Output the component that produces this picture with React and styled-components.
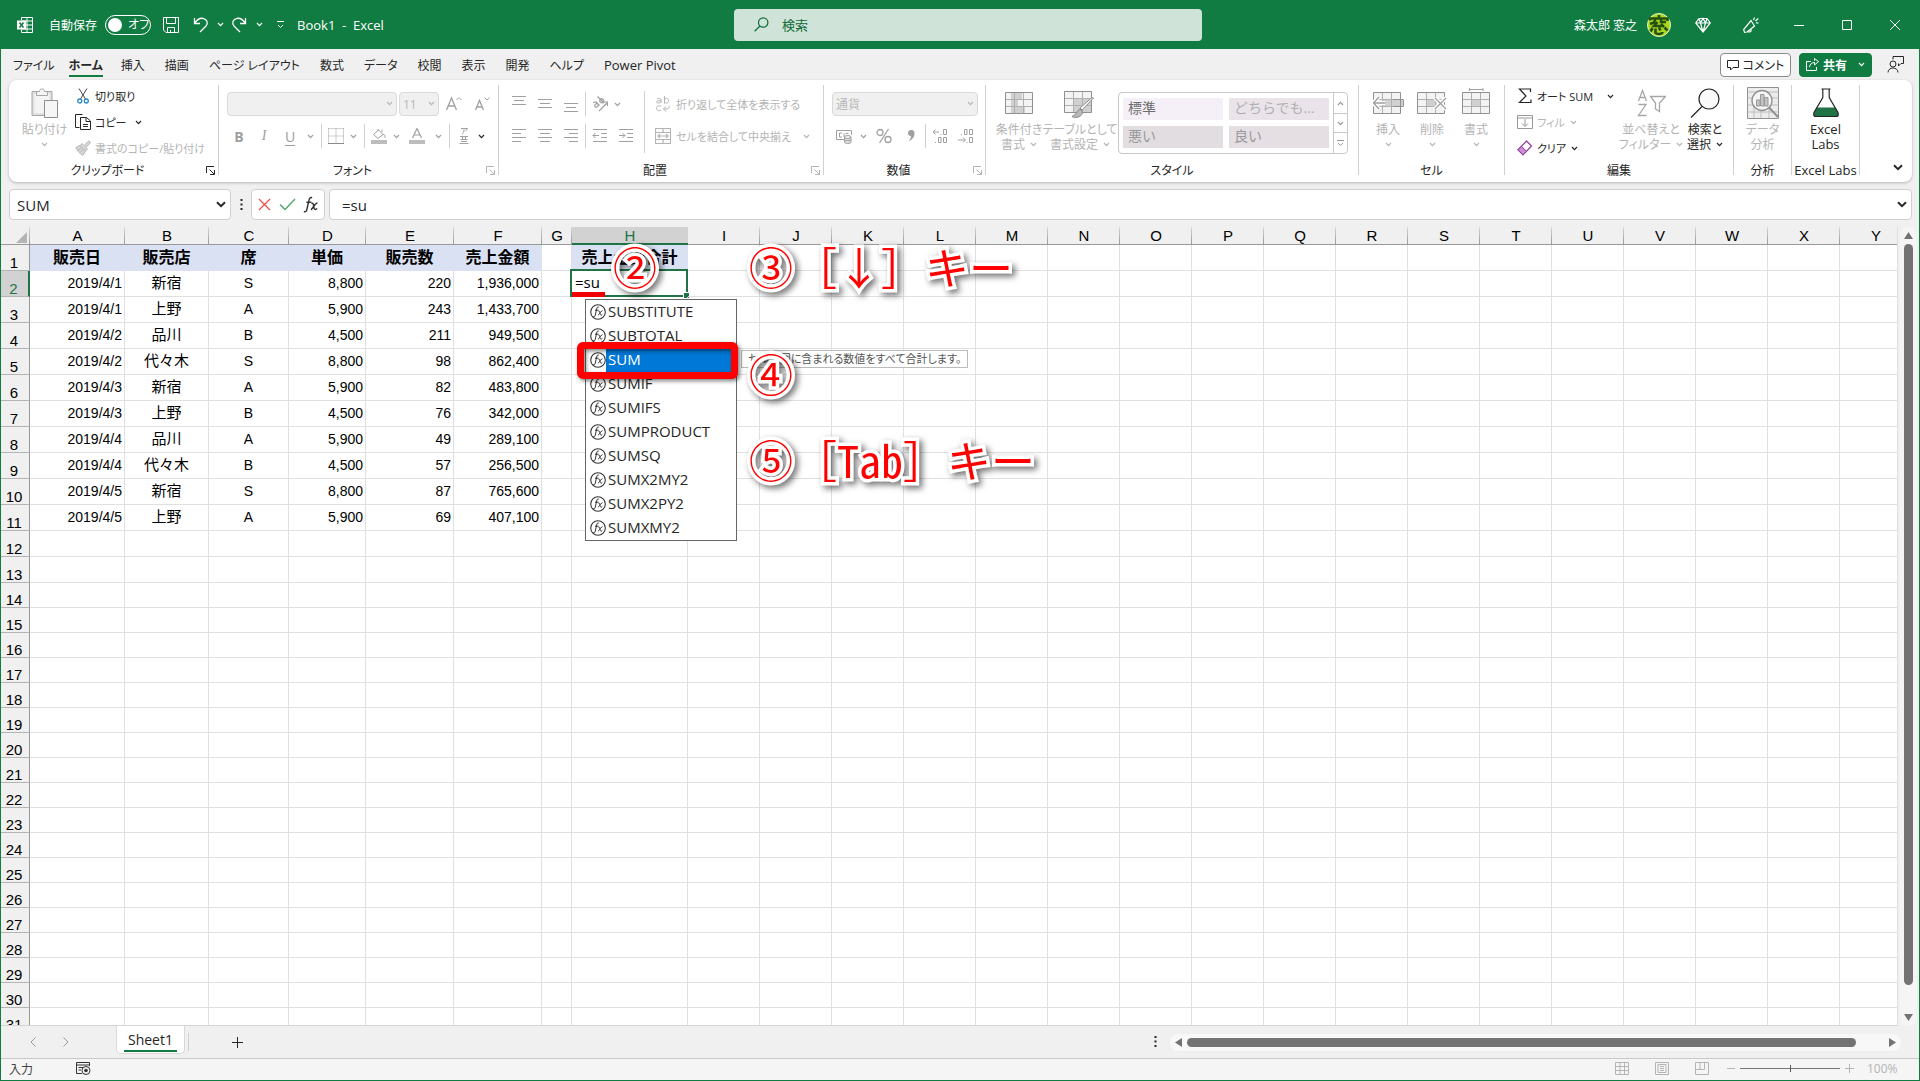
import React from 'react'
import styled, { createGlobalStyle, css } from 'styled-components'

const green = '#107c41'
const ink = '#262626'
const off = '#b4b4b4'

const GlobalStyle = createGlobalStyle`
*{
    box-sizing: border-box;
}
body{
    margin: 0;
    background: #f0f0f0;
    color: ${ink};
    font-family: "Open Sans", "Noto Sans CJK JP", sans-serif;
    font-feature-settings: "palt";
    font-size: 12px;
    overflow: hidden;
}
button, input, select{
    font: inherit;
    font-feature-settings: inherit;
    color: inherit;
    border: 0;
    padding: 0;
    margin: 0;
    background: none;
    outline: none;
}
svg{
    display: block;
    flex: none;
}
`
const Window = styled.div`
height: 100vh;
display: flex;
flex-direction: column;
border: 1px solid ${green};
border-top: 0;
`

/* title bar */
const TitleBar = styled.header`
height: 49px;
flex: none;
display: flex;
align-items: center;
background: ${green};
color: white;
`
const TitleSide = styled.div`
flex: 1 1 0;
display: flex;
align-items: center;
justify-content: ${props => props.$end ? 'flex-end' : 'flex-start'};
padding-left: ${props => props.$end ? '0' : '16px'};
`
const AutoSave = styled.label`
display: flex;
align-items: center;
gap: 8px;
margin: 0 9px 0 16px;
`
const Pill = styled.span`
width: 46px;
height: 20px;
display: flex;
align-items: center;
gap: 6px;
padding-left: 2px;
border: 1px solid white;
border-radius: 10px;
line-height: 18px;
`
const Knob = styled.input`
appearance: none;
width: 14px;
height: 14px;
border-radius: 50%;
background: white;
`
const TitleButton = styled.button`
width: ${props => props.$w || 48}px;
height: 32px;
display: flex;
align-items: center;
justify-content: center;
`
const FileName = styled.h1`
margin: 0 0 0 4px;
font-size: 13px;
font-weight: 400;
white-space: pre;
`
const Search = styled.label`
flex: 0 1 468px;
height: 32px;
padding-left: 20px;
display: flex;
align-items: center;
gap: 13px;
background: #cfe3d8;
border-radius: 4px;
color: #0f6b38;
`
const SearchInput = styled.input`
flex: 1;
font-size: 13px;
&::placeholder{
    color: #0f6b38;
    opacity: 1;
}
`
const Avatar = styled.span`
margin: 0 8px 0 10px;
`

/* tabs */
const TabBar = styled.nav`
height: 31px;
flex: none;
display: flex;
align-items: center;
padding: 0 15px 0 6px;
`
const Tab = styled.a`
height: 31px;
padding: 0 ${props => props.$pad || 10}px;
font-size: ${props => props.$latin ? '13px' : '12px'};
color: ${ink};
text-decoration: none;
white-space: nowrap;
`
const TabText = styled.span`
display: block;
height: 26px;
line-height: 29px;
margin-top: 2px;
${props => props.$active && css`
font-weight: 700;
border-bottom: 2px solid ${green};
`}
`
const Spacer = styled.div`
flex: 1;
`
const CommentButton = styled.button`
width: 71px;
height: 24px;
display: flex;
align-items: center;
justify-content: center;
gap: 4px;
border: 1px solid #8a8a8a;
border-radius: 4px;
background: white;
white-space: nowrap;
`
const ShareButton = styled(CommentButton)`
width: 73px;
margin: 0 15px 0 8px;
border-color: ${green};
background: ${green};
color: white;
font-weight: 700;
`

/* ribbon */
const Ribbon = styled.section`
height: 102px;
flex: none;
display: flex;
margin: 0 7px 7px 8px;
background: white;
border-radius: 8px;
box-shadow: 0 1px 3px rgba(0,0,0,0.25);
`
const GroupBox = styled.div`
flex: 0 0 ${props => props.$w}px;
display: flex;
flex-direction: column;
padding-top: 3px;
`
const Divider = styled.div`
flex: 0 0 1px;
height: 90px;
margin-top: 5px;
background: #d0d0d0;
`
const GroupBody = styled.div`
height: 78px;
display: flex;
padding-left: ${props => props.$pad}px;
`
const GroupFoot = styled.div`
height: 18px;
display: flex;
align-items: center;
padding-right: ${props => props.$launcher ? '3px' : '0'};
font-size: ${props => props.$latin ? '13px' : '12px'};
`
const GroupName = styled.span`
flex: 1;
text-align: center;
white-space: nowrap;
`
const Stack = styled.div`
display: flex;
flex-direction: column;
width: ${props => props.$w ? props.$w + 'px' : 'auto'};
padding-top: ${props => props.$top || 0}px;
`
const Row = styled.div`
height: ${props => props.$h || 32}px;
display: flex;
align-items: center;
gap: ${props => props.$gap || 0}px;
`
const Tool = styled.button`
flex: none;
width: ${props => props.$w || 26}px;
height: 24px;
display: flex;
align-items: center;
justify-content: center;
font-size: 14px;
font-weight: ${props => props.$bold ? 700 : 400};
font-style: ${props => props.$italic ? 'italic' : 'normal'};
font-family: ${props => props.$italic ? '"Liberation Serif", serif' : 'inherit'};
text-decoration: ${props => props.$under ? 'underline' : 'none'};
text-underline-offset: 3px;
color: ${props => props.$on ? ink : '#a0a0a0'};
`
const Sep = styled.span`
flex: 0 0 1px;
height: ${props => props.$h || 24}px;
margin: 0 ${props => props.$m}px;
background: #d0d0d0;
`
const LineButton = styled.button`
height: 26px;
display: flex;
align-items: center;
color: ${props => props.$on ? ink : off};
font-size: 11px;
white-space: nowrap;
`
const IconSlot = styled.span`
width: ${props => props.$w || 24}px;
display: flex;
justify-content: center;
`
const Gap = styled.span`
flex: 0 0 ${props => props.$w}px;
`
const BigButton = styled.button`
width: ${props => props.$w}px;
height: 70px;
display: flex;
flex-direction: column;
align-items: center;
color: ${props => props.$on ? ink : off};
font-size: ${props => props.$latin ? '13px' : '12px'};
line-height: 15px;
white-space: nowrap;
`
const BigIcon = styled.span`
height: 39px;
display: flex;
align-items: center;
`
const BigLine = styled.span`
height: 15px;
display: flex;
align-items: center;
gap: 5px;
`
const SelectWrap = styled.span`
position: relative;
width: ${props => props.$w}px;
height: 24px;
color: #b8b8b8;
svg{
    position: absolute;
    right: 4px;
    top: 9px;
}
`
const Select = styled.select`
appearance: none;
width: 100%;
height: 24px;
padding-left: 3px;
border: 1px solid #d9d9d9;
border-radius: 4px;
background: #f0f0f0;
opacity: 1;
`
const Gallery = styled.div`
width: 230px;
height: 62px;
margin: 9px 0 0 4px;
display: flex;
border: 1px solid #c8c8c8;
border-radius: 4px;
`
const Swatches = styled.div`
flex: 1;
display: grid;
grid-template-columns: 100px 100px;
grid-template-rows: 22px 22px;
gap: 6px;
padding: 5px 4px;
`
const Swatch = styled.button`
padding-left: 5px;
line-height: 18px;
padding-bottom: 2px;
text-align: left;
font-size: 14px;
font-feature-settings: normal;
background: ${props => props.$bg};
color: ${props => props.$fg};
`
const GalleryNav = styled.div`
width: 14px;
display: grid;
grid-template-rows: 20px 19px 21px;
border-left: 1px solid #c8c8c8;
`
const NavButton = styled.button`
display: flex;
align-items: center;
justify-content: center;
color: #999;
& + &{
    border-top: 1px solid #c8c8c8;
}
`
const Collapse = styled.button`
margin: 0 9px 11px auto;
align-self: flex-end;
`

/* formula bar */
const FormulaRow = styled.div`
height: 31px;
flex: none;
display: flex;
align-items: center;
margin: 0 7px 7px 8px;
`
const Field = styled.div`
height: 31px;
display: flex;
align-items: center;
background: white;
border: 1px solid #d0d0d0;
border-radius: 4px;
${props => props.$w ? css`flex: 0 0 ${props.$w}px;` : css`flex: 1;`}
padding: 0 ${props => props.$tight ? 0 : 4}px 0 ${props => props.$pad || 7}px;
font-size: 15px;
input{
    flex: 1;
    min-width: 0;
}
`
const Dots = styled.span`
width: 20px;
display: flex;
justify-content: center;
`
const FxButton = styled.button`
width: 23px;
display: flex;
justify-content: center;
`

/* sheet */
const SheetArea = styled.main`
flex: 1;
min-height: 0;
display: flex;
`
const Sheet = styled.div`
position: relative;
flex: 1;
min-width: 0;
overflow: hidden;
border-right: 1px solid #e0e0e0;
border-bottom: 1px solid #d4d4d4;
`
const Grid = styled.table`
table-layout: fixed;
width: 1910px;
border-collapse: separate;
border-spacing: 0;
font-family: "Liberation Sans", "Noto Sans CJK JP", sans-serif;
font-feature-settings: normal;
color: black;
background: white;
`
const HeadRow = styled.tr`
height: 18px;
`
const ColHead = styled.th`
padding: 1px 0 0;
font-size: 15px;
line-height: ${props => props.$active ? '15px' : '16px'};
font-weight: 400;
color: ${props => props.$active ? '#217346' : 'black'};
background: ${props => props.$active ? '#d2d2d2' : 'linear-gradient(#d8d8d8, #999) right / 1px 100% no-repeat #f0f0f0'};
border-bottom: ${props => props.$active ? '2px solid #217346' : '1px solid #999'};
`
const Corner = styled(ColHead)`
svg{
    margin: 2px 3px 0 auto;
}
`
const SheetRow = styled.tr`
height: ${props => props.$h}px;
`
const RowHead = styled.th`
padding: 0 2px 0 0;
vertical-align: bottom;
font-size: 15px;
line-height: 15px;
font-weight: 400;
color: ${props => props.$active ? '#217346' : 'black'};
background: ${props => props.$active ? '#d2d2d2' : '#f0f0f0'};
border-right: ${props => props.$active ? '2px solid #217346' : '1px solid #999'};
border-bottom: 1px solid #b4b4b4;
`
const Cell = styled.td`
position: relative;
padding: 0 2px 1px;
height: inherit;
font-size: ${props => props.$jp ? '15px' : '14px'};
line-height: 20px;
text-align: ${props => props.$align || 'left'};
white-space: nowrap;
border-right: 1px solid #e0e0e0;
border-bottom: 1px solid #e0e0e0;
${props => props.$title && css`
padding: 1px 2px 0;
font-size: 16px;
font-weight: 700;
background: #dae1f3;
border-color: #dae1f3;
`}
`
const Editor = styled.div`
position: absolute;
inset: -2px -1px -1px -2px;
background: white;
border: 2px solid #217346;
input{
    display: block;
    width: 100%;
    height: 22px;
    padding-left: 3px;
    font-family: "Open Sans", sans-serif;
    font-size: 15px;
}
`
const Handle = styled.span`
position: absolute;
right: -3px;
bottom: -3px;
width: 6px;
height: 6px;
background: #217346;
border: 1px solid white;
border-width: 1px 0 0 1px;
`
const Underline = styled.span`
position: absolute;
left: 0;
bottom: -2px;
width: 33px;
height: 5px;
background: #f00000;
`

/* over the grid */
const Suggestions = styled.ul`
position: absolute;
left: 584px;
top: 72px;
width: 152px;
margin: 0;
padding: 0;
list-style: none;
background: white;
border: 1px solid #666;
`
const Suggestion = styled.li`
height: 24px;
display: flex;
align-items: center;
padding-left: 4px;
font-size: 15px;
`
const SuggestionName = styled.span`
flex: 1;
height: 24px;
line-height: 23px;
padding-left: 2px;
${props => props.$active && css`
background: #0078d7;
color: white;
`}
`
const Tip = styled.div`
position: absolute;
left: 740px;
top: 123px;
height: 18px;
padding: 0 6px;
line-height: 15px;
font-size: 11px;
color: #555;
background: white;
border: 1px solid #bbb;
white-space: nowrap;
`
const RedFrame = styled.div`
position: absolute;
left: 576px;
top: 115px;
width: 161px;
height: 37px;
border: 7px solid red;
border-radius: 6px;
filter: drop-shadow(2px 2px 2px rgba(0,0,0,0.5));
`
const Note = styled.div`
position: absolute;
left: ${props => props.$x}px;
top: ${props => props.$y}px;
font-family: "Noto Sans CJK JP", sans-serif;
font-feature-settings: normal;
font-size: 44px;
font-weight: 400;
line-height: 44px;
color: red;
white-space: nowrap;
text-spacing-trim: space-all;
-webkit-text-stroke: 7px white;
paint-order: stroke fill;
filter: drop-shadow(3px 3px 3px rgba(0,0,0,0.55));
`
const KeyName = styled.span`
font-feature-settings: "hwid";
`

/* scroll bars and bottom */
const VScroll = styled.div`
width: 17px;
margin: 0 2px 0 2px;
display: flex;
flex-direction: column;
align-items: center;
background: #f5f5f5;
border-radius: 8px;
`
const ScrollButton = styled.button`
width: 17px;
height: 17px;
display: flex;
align-items: center;
justify-content: center;
`
const VThumb = styled.div`
flex: 1;
width: 9px;
margin-bottom: 24px;
border-radius: 5px;
background: #737373;
`
const SheetTabs = styled.div`
height: 32px;
flex: none;
display: flex;
align-items: center;
padding-right: 18px;
`
const SmallButton = styled.button`
width: 33px;
height: 24px;
display: flex;
align-items: center;
justify-content: center;
`
const SheetTab = styled.button`
align-self: flex-start;
width: 69px;
height: 28px;
margin: 0 3px 0 34px;
padding: 0 8px;
background: white;
border: 1px solid #d9d9d9;
border-top: 0;
border-radius: 0 0 5px 5px;
font-size: 14px;
span{
    display: block;
    line-height: 25px;
    height: 25px;
    margin: 0 -1px;
    border-bottom: 2px solid ${green};
}
`
const HScroll = styled.div`
width: 731px;
height: 17px;
display: flex;
align-items: center;
background: #f8f8f8;
border-radius: 8px;
`
const HThumb = styled.div`
flex: 1;
height: 9px;
margin-right: 28px;
border-radius: 5px;
background: #737373;
`
const StatusBar = styled.footer`
height: 22px;
flex: none;
display: flex;
align-items: center;
padding: 0 18px 2px 8px;
background: #f5f5f5;
border-top: 1px solid #c8c8c8;
color: #444;
`
const ViewButton = styled.button`
width: 40px;
display: flex;
justify-content: center;
`
const Zoom = styled.input`
appearance: none;
width: 100px;
height: 9px;
margin: 0 5px;
background: linear-gradient(#777, #777) center / 100% 1px no-repeat;
&::-webkit-slider-thumb{
    appearance: none;
    width: 1px;
    height: 7px;
    background: #555;
}
`
const Percent = styled.span`
margin-left: 13px;
width: 34px;
color: ${off};
`

const Svg = ({ w = 16, h = w, box, sw = 1, children }) => (
    <svg width={w} height={h} viewBox={box || `0 0 ${w} ${h}`} fill="none" stroke="currentColor" strokeWidth={sw} aria-hidden="true">{children}</svg>
)
const Chevron = ({ up }) => (
    <Svg w={7} h={5} sw={1.2}><path d={up ? 'M1 4L3.5 1.4L6 4' : 'M1 1L3.5 3.6L6 1'} /></Svg>
)
const BigChevron = () => <Svg w={10} h={7} sw={2}><path d="M1 1.2L5 5.2L9 1.2" /></Svg>

const ExcelIcon = () => (
    <Svg>
        <path d="M4.5 3V.5H15.500V15.500H4.500V13M10 .5V15.500M4.500 4H15.500M9 8H15.500M4.500 12H15.500" />
        <path d="M0 3.500H9V12.500H0Z" fill="white" stroke="none" />
        <path d="M2.500 5.500L6.500 10.500M6.500 5.500L2.500 10.500" stroke={green} strokeWidth="1.500" />
    </Svg>
)
const SaveIcon = () => <Svg><path d="M.5.5H15.500V15.500H3L.5 13ZM3.500.5V6.500H12.500V.5M4.500 15.500V10.500H11.500V15.500M7.500 13V15" /></Svg>
const UndoIcon = () => <Svg sw={1.3}><path d="M1.500 1V6.500H7M1.800 6.200C4 2.500 7 1 10 1.300C14 2 15.500 6 13 9L7 15" /></Svg>
const RedoIcon = () => <Svg sw={1.3}><path d="M14.500 1V6.500H9M14.200 6.200C12 2.500 9 1 6 1.300C2 2 .5 6 3 9L9 15" /></Svg>
const SearchIcon = () => <Svg w={15} sw={1.2}><circle cx="9.200" cy="5.500" r="4.700" /><path d="M6 9L.6 14.300" /></Svg>
const DiamondIcon = () => <Svg sw={1.2}><path d="M4 1.500H12L15.300 6L8 15L.7 6ZM.7 6H15.300M4 1.500L5.500 6L8 15L10.500 6L12 1.500M5.500 6L8 1.500L10.500 6" /></Svg>
const MegaphoneIcon = () => <Svg sw={1.2}><path d="M8 3.500L11.500 9L4 15L1.500 15.300L.7 12.500ZM5 14.500C6.500 15.800 9 14 7.800 12M10.500 3L11.500.5M13 5.800L15.500 6M12.500 4L15.300 1.500" /></Svg>
const PortraitIcon = () => (
    <Svg w={24}>
        <circle cx="12" cy="12" r="11.500" fill="#a8d820" stroke="#e6f4c4" />
        <path d="M3 7.500V5.500H20.500V8M12 2V5M8.500 6L7 9.500L3 11M14 6V9H19M10.500 9L7 13H15M14 11L17 14M5.500 15L3.500 18.500M8.500 15.500V19.500C8.500 21.500 15.500 21.500 15.500 19M12 14.500L13.500 17.500M17.500 14.500L20.500 17.500" stroke="#25500f" strokeWidth="2.600" />
    </Svg>
)
const CommentIcon = () => <Svg w={12}><path d="M.5 1.500H11.500V8.500H6L3.500 11V8.500H.5Z" /></Svg>
const ShareIcon = () => <Svg w={13}><path d="M5 3.500H.5V12.500H10.500V9M3.500 9C4 6 6 4.500 8.500 4.500V7L12.500 3.500L8.500.5V2.800" /></Svg>
const PersonIcon = () => <Svg w={17}><circle cx="6" cy="8" r="3" /><path d="M1 16.500C1 10.500 11 10.500 11 16.500M6 3.500V.5H16.500V7.500H14L11.500 10V7.500" /></Svg>

const PasteIcon = () => (
    <Svg w={28} h={30}>
        <path d="M1 3.500H21V27.500H1Z" fill="#e0e0e0" stroke="#a6a6a6" />
        <path d="M3.500 6H18.500V25H3.500Z" fill="#f4f4f4" stroke="none" />
        <path d="M5.500 7.500V3.500H8.500C8.500 0 13.500 0 13.500 3.500H16.500V7.500Z" fill="#f4f4f4" stroke="#a6a6a6" />
        <path d="M13.500 12.500H26.500V29.500H13.500Z" fill="#f6f6f6" stroke="#8f8f8f" />
    </Svg>
)
const CutIcon = () => (
    <Svg w={12} h={16}>
        <path d="M2 .5L8.500 11M10 .5L3.500 11" stroke="#444" />
        <circle cx="2.700" cy="13" r="2" stroke="#2b88c9" strokeWidth="1.300" />
        <circle cx="9.300" cy="13" r="2" stroke="#2b88c9" strokeWidth="1.300" />
    </Svg>
)
const CopyIcon = () => <Svg><path d="M4.500 13.500H.5V.5H7.500M5.500 3.500H11.500L15.500 7V15.500H5.500ZM11 3.500V7.500H15.500M8 10.500H13M8 12.500H13" /></Svg>
const BrushIcon = () => <Svg><path d="M9.500 5L14 .8L15.500 2.500L11.500 7M7 3.500L12.500 9L10.500 11L5 5.500ZM5 5.500L.8 7.500C2.500 11 4.500 13.500 8 15.300L10.500 11M3 10L6 8M5 12.500L8 9.500" fill="#d8d8d8" /></Svg>
const LauncherIcon = ({ on }) => <Svg w={9} h={9}><path stroke={on ? ink : '#b4b4b4'} d="M.5 7V.5H8M3.500 3.500L8 8M8.500 4V8.500H4" /></Svg>
const BorderIcon = () => (
    <Svg><path d="M.5.5H15.500M.5.5V15M15.500.5V15M8 .5V15M.5 8H15.500" strokeDasharray="1 1" /><path d="M0 15.500H16" stroke="#8a8a8a" /></Svg>
)
const BucketIcon = () => <Svg><path d="M6.500 1L12 6.500L7 10.500L2.500 6.500L8 1.500M12 6.500C14 6 14 8 14 10M11 4V1.500" /><path d="M0 12H16V16H0Z" fill="#bdbdbd" stroke="none" /></Svg>
const FontColorIcon = () => <Svg><path d="M3.500 10L8 .5L12.500 10M5 7H11" strokeWidth="1.200" /><path d="M0 12H16V16H0Z" fill="#bdbdbd" stroke="none" /></Svg>
const RubyIcon = () => <Svg><path d="M5 .5H11.500L9.500 3M8 1.500C8 4 7.500 5 6 6M4 8.500H12M6.500 8.500V11.500M9.500 8.500V11.500M4.500 11.500H11.500M5 13.500H11M3.500 15.500H12.500" /></Svg>
const SizeIcon = ({ up }) => <Svg><path d={up ? 'M.5 14L5.500 2L10.500 14M2.200 10H8.800' : 'M1.500 14L5.500 4.500L9.500 14M2.800 11H8.200'} strokeWidth="1.300" /><path d={up ? 'M10.500 4L13 1.500L15.500 4' : 'M10.500 1.500L13 4L15.500 1.500'} /></Svg>

// three-line paragraph icons: each line is [x1, x2]
const LinesIcon = ({ lines, top = 1, step = 4 }) => (
    <Svg>{lines.map((l, i) => <path key={i} d={`M${l[0]} ${top + i * step + 0.5}H${l[1]}`} />)}</Svg>
)
const IndentIcon = ({ right }) => <Svg><path d="M1 1.500H15M9 5.500H15M9 9.500H15M1 13.500H15" /><path d={right ? 'M1 7.500H7M4.500 5L7 7.500L4.500 10' : 'M7 7.500H1M3.500 5L1 7.500L3.500 10'} /></Svg>
const OrientIcon = () => <Svg><path d="M7 15L15.500 6.500M11.500 6H15.500V10M1 6.500L4 6L7.500 9.500M5.500 7.500C4 7.500 2 9 3 10.500C4.500 12 6.500 10.500 6 8.500M5.500.5L12 7M8 3.500C10 1.500 13 4.500 11 6.500C9 7.500 7 5.500 8 3.500" strokeWidth="1.200" /></Svg>
const WrapIcon = () => <Svg><path d="M2 3C4 1.800 6 2.500 6 4V7M6 4.500C3.500 4.500 1.500 5 1.500 6C1.500 7.500 5 7.500 6 5.500M9.500 0V7.500M9.500 4C10.500 1.500 13.500 2 13.500 4.700C13.500 7.500 10.500 8 9.500 5.500M6 10.500C4 9 1.500 10 1.500 12.300C1.500 14.500 4 15.500 6 14M14 9.500C15.500 13 12 13 8.500 13M11 10.500L8.500 13L11 15.500" /></Svg>
const MergeIcon = () => <Svg><path d="M.5.5H15.500V15.500H.5ZM.5 4.500H15.500M.5 11.500H15.500M8 .5V4.500M8 11.500V15.500M3 8H13M5 6L3 8L5 10M11 6L13 8L11 10" strokeWidth="1.200" /></Svg>
const MoneyIcon = () => <Svg><path d="M8 11.500H.5V2.500H15.500V7M6 5H3.500V9H6M8 9V5.500M9.500 5.500H12.500" /><path d="M8.500 9V14C8.500 16 15 16 15 14V9M8.500 11.500C8.500 13 15 13 15 11.500" fill="#ddd" /><ellipse cx="11.700" cy="9" rx="3.300" ry="1.500" fill="#eee" /></Svg>
const PercentIcon = () => <Svg sw={1.3}><circle cx="4" cy="4.500" r="3" /><circle cx="12" cy="11.500" r="3" /><path d="M12.500 1L3.500 15" /></Svg>
const CommaIcon = () => <Svg><path d="M5 5A3 3 0 1 1 11.500 5.500C11.500 9 9 12 5.500 13.500C7 11.500 8 10 8 8A3 3 0 0 1 5 5Z" fill="currentColor" stroke="none" /></Svg>
const DecimalIcon = ({ less }) => (
    <Svg>
        {less
            ? <path d="M3.500 6V7M6.500 1.500H9V6.500H6.500ZM11.500 1.500H14.500V6.500H11.500ZM0 12H7M5 9.500L7.500 12L5 14.500M9 14V15M11.500 9.500H14.500V14.500H11.500Z" />
            : <path d="M7 4H1M3.500 1.500L1 4L3.500 6.500M9 6V7M11.500 1.500H14.500V6.500H11.500ZM3.500 14V15M6.500 9.500H9V14.500H6.500ZM11.500 9.500H14.500V14.500H11.500Z" />}
    </Svg>
)
const TableBase = ({ fill }) => (
    <>
        <path d="M.5 4.500H27.500V25.500H.5Z" fill="#f3f3f3" stroke="none" />
        <path d={fill} fill="#d0d0d0" stroke="none" />
        <path d="M9.500 4.500V25.500M18.500 4.500V25.500M.5 11.500H27.500M.5 18.500H27.500" stroke="#b0b0b0" />
        <path d="M.5 4.500H27.500V25.500H.5Z" stroke="#909090" />
    </>
)
const CondIcon = () => <Svg w={28} h={30}><TableBase fill="M6 5H17V11H6ZM6 12H13V18H6ZM6 19H20V25H6Z" /></Svg>
const FormatTableIcon = () => (
    <Svg w={32} h={32}>
        <TableBase fill="M9 11H27V25H9Z" />
        <path d="M29.500 11L18 23L16 21L28 10.500Z" fill="white" stroke="#8a8a8a" />
        <path d="M16 22C13 23 13 27 8 29.500C13 32 19 29 18.500 24.500Z" fill="#b8b8b8" stroke="#8a8a8a" />
    </Svg>
)
const InsertIcon = () => <Svg w={31} h={30}><TableBase fill="M9 11H30V18H9Z" /><path d="M30.500 11.500V18.500M30 11.500H20M30 18.500H20" stroke="#909090" /><path d="M12 15H0M6 9L0 15L6 21" stroke="white" strokeWidth="4" /><path d="M12 15H0M6 9L.5 15L6 21" strokeWidth="1.400" stroke="#a0a0a0" /></Svg>
const DeleteIcon = () => <Svg w={30} h={30}><TableBase fill="M9 11H20V18H9Z" /><path d="M18 10L29 21M29 10L18 21" stroke="white" strokeWidth="4" /><path d="M18 10L29 21M29 10L18 21" stroke="#a0a0a0" strokeWidth="1.300" /></Svg>
const FormatIcon = () => <Svg w={28} h={30}><TableBase fill="M9 11H19V18H9Z" /><path d="M7 1.500H21M7.500 0V3M21 0V3" stroke="#a0a0a0" /></Svg>
const SumIcon = () => <Svg><path d="M13.500 4V1H2.500L9 8L2.500 14.500H14V11.500" strokeWidth="1.200" /></Svg>
const FillIcon = () => <Svg w={16} h={14}><path d="M.5.5H15.500V13.500H.5ZM.5 3H15.500M8 4V11M5 8.500L8 11.500L11 8.500" stroke="#999" /></Svg>
const EraserIcon = () => <Svg><path d="M9.500 1L14.500 6L6 14.800L1 9.800Z" fill="white" stroke="#8e3a9d" strokeWidth="1.200" /><path d="M4.500 6.300L9.500 11.300L6 14.800L1 9.800Z" fill="#cf8bd8" stroke="#8e3a9d" /></Svg>
const SortIcon = () => <Svg w={29} h={28}><path d="M1.500 12L5.500 1.500L9.500 12M3 8.500H8M1.500 15.500H9L1.500 26.500H9.500M13.500 7.500H28.500L22.500 14V22.500L18.500 20V14Z" stroke="#a6a6a6" strokeWidth="1.300" /></Svg>
const FindIcon = () => <Svg w={30} h={30} sw={1.2}><circle cx="19" cy="11" r="10" fill="#fafafa" /><path d="M12 18.500L1 29.500" /></Svg>
const AnalyzeIcon = () => (
    <Svg w={32} h={32}>
        <path d="M.5.5H31.500V31.500H.5Z" fill="#ececec" stroke="#909090" />
        <path d="M.5 5H31.500M.5 11H31.500M.5 18H31.500M.5 25H31.500M7 18V31M14 18V31M22 5V31" stroke="#bdbdbd" />
        <circle cx="15" cy="13.500" r="10" fill="#f6f6f6" stroke="#909090" strokeWidth="1.300" />
        <path d="M9.500 13H13V19H9.500ZM13.500 7.500H17V19H13.500ZM17.500 10.500H21V19H17.500Z" fill="#c4c4c4" stroke="#999" />
        <path d="M22 20.500L31 30" stroke="#909090" strokeWidth="2" />
    </Svg>
)
const FlaskIcon = () => <Svg w={26} h={30}><path d="M3.500 19.500H22.500L25 25C25.500 27.500 25 28.500 23 28.500H3C1 28.500 .5 27.500 1 25Z" fill="#217346" stroke="none" /><path d="M8.500 1H17.500M9.800 1V9.500L1 24.500C.3 27.500 1 28.500 3 28.500H23C25 28.500 25.700 27.500 25 24.500L16.200 9.500V1" strokeWidth="1.200" /></Svg>

const FxIcon = ({ size = 16, ring }) => (
    <Svg w={size} box={ring ? '0 0 16 16' : '2.500 2 10.500 11.500'}>
        {ring && <circle cx="8" cy="8" r="7.300" fill="white" stroke="#333" strokeWidth="1.100" />}
        <path d="M8.800 3.200C7.500 2.500 7 3.500 6.700 5L5.300 11C5 12.500 4.300 13 3.300 12.500M5 6.200H8.300M8.300 7C9.800 6.300 9.700 8 10 9.500C10.200 11.300 11.300 11.500 12.200 10.500M12.500 6.800C11 6.500 9.500 10.500 8 11.300" stroke="#333" />
    </Svg>
)
const XIcon = () => <Svg w={13} sw={1.3}><path d="M1 1L12 12M12 1L1 12" stroke="#e8504a" /></Svg>
const CheckIcon = () => <Svg w={17} h={13} sw={1.3}><path d="M1 6.500L6 11.500L16 1" stroke="#4ba566" /></Svg>
const MoreIcon = () => <Svg w={3} h={12}><path d="M.5 1H2.500M.5 5.500H2.500M.5 10H2.500" strokeWidth="2" /></Svg>
const Arrow = ({ d }) => <Svg w={9} h={9}><path d={d} fill="#737373" stroke="none" /></Svg>

const Group = ({ name, w, pad = 7, launcher, latin, children }) => (
    <>
        <GroupBox $w={w}>
            <GroupBody $pad={pad}>{children}</GroupBody>
            <GroupFoot $launcher={launcher} $latin={latin}>
                <GroupName>{name}</GroupName>
                {launcher && <button aria-label={name}><LauncherIcon on={launcher === 'on'} /></button>}
            </GroupFoot>
        </GroupBox>
        <Divider />
    </>
)
const Big = ({ icon, lines, w, on, latin, arrow }) => (
    <BigButton $w={w} $on={on} $latin={latin}>
        <BigIcon>{icon}</BigIcon>
        {lines.map((line, i) => (
            <BigLine key={i}>{line}{arrow && i === lines.length - 1 && <Chevron />}</BigLine>
        ))}
    </BigButton>
)
const Drop = ({ w = 14, on }) => <Tool $w={w} $on={on} aria-label="▾"><Chevron /></Tool>

const tabs = [
    { name: 'ファイル', pad: 6 },
    { name: 'ホーム', pad: 8 },
    { name: '挿入' },
    { name: '描画' },
    { name: 'ページ レイアウト' },
    { name: '数式' },
    { name: 'データ' },
    { name: '校閲' },
    { name: '表示' },
    { name: '開発' },
    { name: 'ヘルプ' },
    { name: 'Power Pivot' },
]
const widths = [29, 95, 84, 80, 77, 88, 88, 30, 116].concat(Array(17).fill(72))
const letters = 'ABCDEFGHIJKLMNOPQRSTUVWXY'.split('')
const heads = ['販売日', '販売店', '席', '単価', '販売数', '売上金額', '', '売上金額合計']
const data = [
    ['2019/4/1', '新宿', 'S', '8,800', '220', '1,936,000'],
    ['2019/4/1', '上野', 'A', '5,900', '243', '1,433,700'],
    ['2019/4/2', '品川', 'B', '4,500', '211', '949,500'],
    ['2019/4/2', '代々木', 'S', '8,800', '98', '862,400'],
    ['2019/4/3', '新宿', 'A', '5,900', '82', '483,800'],
    ['2019/4/3', '上野', 'B', '4,500', '76', '342,000'],
    ['2019/4/4', '品川', 'A', '5,900', '49', '289,100'],
    ['2019/4/4', '代々木', 'B', '4,500', '57', '256,500'],
    ['2019/4/5', '新宿', 'S', '8,800', '87', '765,600'],
    ['2019/4/5', '上野', 'A', '5,900', '69', '407,100'],
]
const functions = ['SUBSTITUTE', 'SUBTOTAL', 'SUM', 'SUMIF', 'SUMIFS', 'SUMPRODUCT', 'SUMSQ', 'SUMX2MY2', 'SUMX2PY2', 'SUMXMY2']

const Title = () => (
    <TitleBar>
        <TitleSide>
            <ExcelIcon />
            <AutoSave>
                自動保存
                <Pill><Knob type="checkbox" />オフ</Pill>
            </AutoSave>
            <TitleButton $w={22} aria-label="Save"><SaveIcon /></TitleButton>
            <Gap $w={7} />
            <TitleButton $w={24} aria-label="Undo"><UndoIcon /></TitleButton>
            <TitleButton $w={14} aria-label="Undo list"><Chevron /></TitleButton>
            <TitleButton $w={24} aria-label="Redo"><RedoIcon /></TitleButton>
            <TitleButton $w={16} aria-label="Redo list"><Chevron /></TitleButton>
            <TitleButton $w={26} aria-label="Customize"><Svg w={7} h={8}><path d="M0 .5H7M1 4L3.500 6.500L6 4" /></Svg></TitleButton>
            <FileName>Book1  -  Excel</FileName>
        </TitleSide>
        <Search>
            <SearchIcon />
            <SearchInput placeholder="検索" />
        </Search>
        <TitleSide $end>
            <span>森太郎 窓之</span>
            <Avatar><PortraitIcon /></Avatar>
            <TitleButton aria-label="Premium"><DiamondIcon /></TitleButton>
            <TitleButton aria-label="News"><MegaphoneIcon /></TitleButton>
            <TitleButton aria-label="Minimize"><Svg w={10}><path d="M0 5.500H10" /></Svg></TitleButton>
            <TitleButton aria-label="Maximize"><Svg w={10}><path d="M.5.5H9.500V9.500H.5Z" /></Svg></TitleButton>
            <TitleButton aria-label="Close"><Svg w={10}><path d="M0 0L10 10M10 0L0 10" /></Svg></TitleButton>
        </TitleSide>
    </TitleBar>
)

const Home = () => (
    <Ribbon>
        <Group name="クリップボード" w={209} pad={9} launcher="on">
            <Big icon={<PasteIcon />} lines={['貼り付け', '']} w={53} arrow />
            <Stack>
                <LineButton $on><IconSlot><CutIcon /></IconSlot>切り取り</LineButton>
                <LineButton $on><IconSlot><CopyIcon /></IconSlot>コピー<Gap $w={8} /><Chevron /></LineButton>
                <LineButton><IconSlot><BrushIcon /></IconSlot>書式のコピー/貼り付け</LineButton>
            </Stack>
        </Group>
        <Group name="フォント" w={279} pad={8} launcher="off">
            <Stack $top={5}>
                <Row $gap={2}>
                    <SelectWrap $w={170}><Select aria-label="フォント" /><Chevron /></SelectWrap>
                    <SelectWrap $w={40}><Select aria-label="サイズ"><option>11</option></Select><Chevron /></SelectWrap>
                    <Tool $w={26} aria-label="A+"><SizeIcon up /></Tool>
                    <Tool $w={26} aria-label="A-"><SizeIcon /></Tool>
                </Row>
                <Row>
                    <Tool $w={24} $bold>B</Tool>
                    <Tool $italic>I</Tool>
                    <Tool $w={26} $under>U</Tool>
                    <Drop />
                    <Sep $m={4} />
                    <Tool $w={20} aria-label="Borders"><BorderIcon /></Tool>
                    <Drop />
                    <Sep $m={4} />
                    <Tool $w={20} aria-label="Fill"><BucketIcon /></Tool>
                    <Drop />
                    <Tool $w={28} aria-label="Color"><FontColorIcon /></Tool>
                    <Drop />
                    <Sep $m={4} />
                    <Tool $w={20} aria-label="Ruby"><RubyIcon /></Tool>
                    <Drop on />
                </Row>
            </Stack>
        </Group>
        <Group name="配置" w={324} launcher="off">
            <Stack $top={5} $w={133}>
                <Row>
                    <Tool aria-label="Top"><LinesIcon lines={[[1, 15], [3, 13], [1, 15]]} top={0} /></Tool>
                    <Tool aria-label="Middle"><LinesIcon lines={[[1, 15], [3, 13], [1, 15]]} top={3} /></Tool>
                    <Tool aria-label="Bottom"><LinesIcon lines={[[1, 15], [3, 13], [1, 15]]} top={7} /></Tool>
                    <Sep $m={1} />
                    <Tool aria-label="Orientation"><OrientIcon /></Tool>
                    <Drop w={8} />
                </Row>
                <Row>
                    <Tool aria-label="Left"><LinesIcon lines={[[1, 15], [1, 10], [1, 15], [1, 10]]} /></Tool>
                    <Tool aria-label="Center"><LinesIcon lines={[[1, 15], [3, 13], [1, 15], [3, 13]]} /></Tool>
                    <Tool aria-label="Right"><LinesIcon lines={[[1, 15], [6, 15], [1, 15], [6, 15]]} /></Tool>
                    <Sep $m={1} />
                    <Tool aria-label="Outdent"><IndentIcon /></Tool>
                    <Tool aria-label="Indent"><IndentIcon right /></Tool>
                </Row>
            </Stack>
            <Row $h={78}><Sep $h={62} $m={5} /></Row>
            <Stack $top={5}>
                <Row><LineButton><IconSlot $w={26}><WrapIcon /></IconSlot>折り返して全体を表示する</LineButton></Row>
                <Row><LineButton><IconSlot $w={26}><MergeIcon /></IconSlot>セルを結合して中央揃え<Gap $w={12} /><Chevron /></LineButton></Row>
            </Stack>
        </Group>
        <Group name="数値" w={161} pad={8} launcher="off">
            <Stack $top={5}>
                <Row><SelectWrap $w={146}><Select aria-label="数値"><option>通貨</option></Select><Chevron /></SelectWrap></Row>
                <Row>
                    <Tool $w={24} aria-label="Currency"><MoneyIcon /></Tool>
                    <Drop />
                    <Tool $w={28} aria-label="Percent"><PercentIcon /></Tool>
                    <Tool aria-label="Comma"><CommaIcon /></Tool>
                    <Sep $m={1} />
                    <Tool aria-label="More digits"><DecimalIcon /></Tool>
                    <Tool aria-label="Fewer digits"><DecimalIcon less /></Tool>
                </Row>
            </Stack>
        </Group>
        <Group name="スタイル" w={372} pad={6}>
            <Big icon={<CondIcon />} lines={['条件付き', '書式']} w={54} arrow />
            <Big icon={<FormatTableIcon />} lines={['テーブルとして', '書式設定']} w={68} arrow />
            <Gallery>
                <Swatches>
                    <Swatch $bg="#f5f0f7" $fg="#6e6e6e">標準</Swatch>
                    <Swatch $bg="#eae4ea" $fg="#b0b0b0">どちらでも...</Swatch>
                    <Swatch $bg="#e2dde1" $fg="#999">悪い</Swatch>
                    <Swatch $bg="#e5dfe3" $fg="#999">良い</Swatch>
                </Swatches>
                <GalleryNav>
                    <NavButton aria-label="Up"><Chevron up /></NavButton>
                    <NavButton aria-label="Down"><Chevron /></NavButton>
                    <NavButton aria-label="More"><Svg w={7} h={7}><path d="M0 .5H7M1 3L3.500 5.500L6 3" /></Svg></NavButton>
                </GalleryNav>
            </Gallery>
        </Group>
        <Group name="セル" w={145}>
            <Big icon={<InsertIcon />} lines={['挿入', '']} w={44} arrow />
            <Big icon={<DeleteIcon />} lines={['削除', '']} w={44} arrow />
            <Big icon={<FormatIcon />} lines={['書式', '']} w={44} arrow />
        </Group>
        <Group name="編集" w={228} pad={8}>
            <Stack $w={109}>
                <LineButton $on><IconSlot><SumIcon /></IconSlot>オート SUM<Gap $w={14} /><Chevron /></LineButton>
                <LineButton><IconSlot><FillIcon /></IconSlot>フィル<Gap $w={5} /><Chevron /></LineButton>
                <LineButton $on><IconSlot><EraserIcon /></IconSlot>クリア<Gap $w={5} /><Chevron /></LineButton>
            </Stack>
            <Big icon={<SortIcon />} lines={['並べ替えと', 'フィルター']} w={58} arrow />
            <Big icon={<FindIcon />} lines={['検索と', '選択']} w={50} on arrow />
        </Group>
        <Group name="分析" w={57} pad={0}>
            <Big icon={<AnalyzeIcon />} lines={['データ', '分析']} w={57} />
        </Group>
        <Group name="Excel Labs" w={67} pad={0} latin>
            <Big icon={<FlaskIcon />} lines={['Excel', 'Labs']} w={67} on latin />
        </Group>
        <Collapse aria-label="Collapse"><BigChevron /></Collapse>
    </Ribbon>
)

const align = ['right', 'center', 'center', 'right', 'right', 'right']

const Table = () => (
    <Grid>
        <colgroup>
            {widths.map((w, i) => <col key={i} width={w} />)}
        </colgroup>
        <thead>
            <HeadRow>
                <Corner><Svg w={11}><path d="M11 0V11H0Z" fill="#b4b4b4" stroke="none" /></Svg></Corner>
                {letters.map(l => <ColHead key={l} $active={l === 'H'}>{l}</ColHead>)}
            </HeadRow>
        </thead>
        <tbody>
            {Array.from({ length: 31 }, (_, r) => (
                <SheetRow key={r} $h={r < 13 ? 26 : 25}>
                    <RowHead $active={r === 1}>{r + 1}</RowHead>
                    {letters.map((l, c) => {
                        if (r === 0) return <Cell key={l} $title={c < 8 && c !== 6} $align="center">{heads[c]}</Cell>
                        if (r === 1 && l === 'H') {
                            return (
                                <Cell key={l}>
                                    <Editor><input aria-label="H2" defaultValue="=su" /><Handle /><Underline /></Editor>
                                </Cell>
                            )
                        }
                        return <Cell key={l} $align={align[c]} $jp={c === 1}>{data[r - 1] && data[r - 1][c]}</Cell>
                    })}
                </SheetRow>
            ))}
        </tbody>
    </Grid>
)

const App = () => {
    return (
        <>
        <GlobalStyle />
        <Window>
            <Title />
            <TabBar>
                {tabs.map(t => (
                    <Tab key={t.name} href="#" $pad={t.pad} $latin={t.name === 'Power Pivot'}>
                        <TabText $active={t.name === 'ホーム'}>{t.name}</TabText>
                    </Tab>
                ))}
                <Spacer />
                <CommentButton><CommentIcon />コメント</CommentButton>
                <ShareButton><ShareIcon />共有<Gap $w={3} /><Chevron /></ShareButton>
                <PersonIcon />
            </TabBar>
            <Home />
            <FormulaRow>
                <Field $w={222}><input aria-label="Name" defaultValue="SUM" /><BigChevron /></Field>
                <Dots><MoreIcon /></Dots>
                <Field $w={74} $pad={1} $tight>
                    <FxButton aria-label="Cancel"><XIcon /></FxButton>
                    <FxButton aria-label="Enter"><CheckIcon /></FxButton>
                    <FxButton aria-label="fx"><FxIcon size={17} /></FxButton>
                </Field>
                <Gap $w={4} />
                <Field $pad={12}><input aria-label="Formula" defaultValue="=su" /><BigChevron /></Field>
            </FormulaRow>
            <SheetArea>
                <Sheet>
                    <Table />
                    <Suggestions>
                        {functions.map(f => (
                            <Suggestion key={f}>
                                <FxIcon ring />
                                <SuggestionName $active={f === 'SUM'}>{f}</SuggestionName>
                            </Suggestion>
                        ))}
                    </Suggestions>
                    <Tip>セル範囲に含まれる数値をすべて合計します。</Tip>
                    <RedFrame />
                    <Note $x={612} $y={17}>②</Note>
                    <Note $x={748} $y={17}>③［↓］キー</Note>
                    <Note $x={748} $y={124}>④</Note>
                    <Note $x={748} $y={210}>⑤［<KeyName>Tab</KeyName>］キー</Note>
                </Sheet>
                <VScroll>
                    <ScrollButton aria-label="Up"><Arrow d="M0 8L4.500 1L9 8Z" /></ScrollButton>
                    <VThumb />
                    <ScrollButton aria-label="Down"><Arrow d="M0 1L4.500 8L9 1Z" /></ScrollButton>
                </VScroll>
            </SheetArea>
            <SheetTabs>
                <Gap $w={15} />
                <SmallButton aria-label="Previous"><Svg w={6} h={10}><path d="M5.500.5L1 5L5.500 9.500" stroke="#999" /></Svg></SmallButton>
                <SmallButton aria-label="Next"><Svg w={6} h={10}><path d="M.5.5L5 5L.5 9.500" stroke="#999" /></Svg></SmallButton>
                <SheetTab><span>Sheet1</span></SheetTab>
                <Sep $m={0} $h={18} />
                <Gap $w={32} />
                <SmallButton aria-label="Add"><Svg w={11}><path d="M5.500 0V11M0 5.500H11" /></Svg></SmallButton>
                <Spacer />
                <Dots><MoreIcon /></Dots>
                <Gap $w={5} />
                <HScroll>
                    <ScrollButton aria-label="Left"><Arrow d="M8 0L1 4.500L8 9Z" /></ScrollButton>
                    <HThumb />
                    <ScrollButton aria-label="Right"><Arrow d="M1 0L8 4.500L1 9Z" /></ScrollButton>
                </HScroll>
            </SheetTabs>
            <StatusBar>
                入力
                <Gap $w={43} />
                <Svg w={15} h={13}><path d="M6 11.500H.5V.5H13.500V4M.5 3H13.500M2.500 5.500H7M2.500 8H5" stroke="#333" /><circle cx="10" cy="8.500" r="4" stroke="#333" /><circle cx="10" cy="8.500" r="1.800" fill="#333" stroke="none" /></Svg>
                <Spacer />
                <ViewButton aria-label="Normal"><Svg w={14} h={13}><path d="M.5.5H13.500V12.500H.5ZM.5 4.500H13.500M.5 8.500H13.500M5 .5V12.500M9.500.5V12.500" stroke={off} /></Svg></ViewButton>
                <ViewButton aria-label="Page layout"><Svg w={14} h={13}><path d="M.5.5H13.500V12.500H.5ZM3 2.500H11V10.500H3ZM5 4.500H9M5 6.500H9M5 8.500H9" stroke={off} /></Svg></ViewButton>
                <ViewButton aria-label="Page break"><Svg w={14} h={13}><path d="M.5.5H13.500V12.500H.5ZM5 .5V7.500M9.500.5V7.500M.5 7.500H9.500" stroke={off} /></Svg></ViewButton>
                <Gap $w={5} />
                <Svg w={8} h={9}><path d="M0 4.500H8" stroke={off} /></Svg>
                <Zoom type="range" aria-label="Zoom" defaultValue={50} />
                <Svg w={9}><path d="M0 4.500H9M4.500 0V9" stroke={off} /></Svg>
                <Percent>100%</Percent>
            </StatusBar>
        </Window>
        </>
    )
}

export default App
